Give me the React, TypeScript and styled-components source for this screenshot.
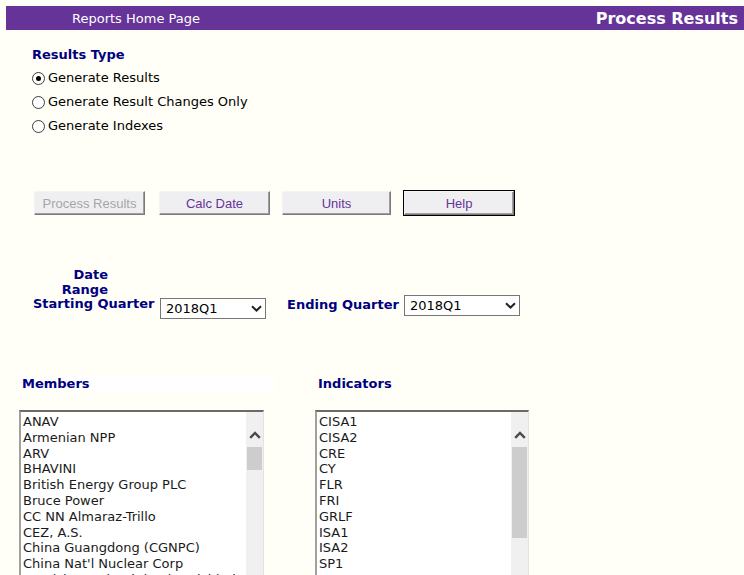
import React from "react";
import styled, { createGlobalStyle } from "styled-components";

const GlobalStyle = createGlobalStyle`
  html, body { margin: 0; padding: 0; background: #fffff7; }
  body { font-family: "DejaVu Sans", Verdana, sans-serif; font-size: 13px; color: #000; }
`;

const Page = styled.div`
  padding: 6px 0 0 6px;
`;

const HeaderBar = styled.div`
  display: flex;
  align-items: center;
  justify-content: space-between;
  height: 24px;
  background: #663399;
  color: #fff;
`;

const HomeLink = styled.span`
  padding-left: 66px;
  font-size: 13px;
`;

const Title = styled.span`
  padding-right: 6px;
  font-size: 16px;
  font-weight: bold;
`;

const Section = styled.div`
  padding-left: 26px;
`;

const Heading = styled.div`
  color: #000080;
  font-weight: bold;
  font-size: 13px;
  line-height: 16px;
`;

const TypeBlock = styled(Section)`
  margin-top: 17px;
`;

const RadioList = styled.div`
  display: flex;
  flex-direction: column;
  gap: 8px;
  margin-top: 7px;
`;

const RadioRow = styled.label`
  display: flex;
  align-items: center;
  gap: 3px;
  height: 16px;
  line-height: 16px;
`;

const RadioCircle = styled.span<{ $checked?: boolean }>`
  width: 11px;
  height: 11px;
  border: 1px solid #3c3c3c;
  border-radius: 50%;
  background: #fff;
  display: flex;
  align-items: center;
  justify-content: center;
  &::after {
    content: "";
    width: 5px;
    height: 5px;
    border-radius: 50%;
    background: ${(p) => (p.$checked ? "#000" : "transparent")};
  }
`;

const ButtonRow = styled.div`
  display: flex;
  margin-top: 57px;
  padding-left: 28px;
`;

const Button = styled.button<{ $w: number; $gap: number; $focus?: boolean }>`
  width: ${(p) => p.$w}px;
  height: 24px;
  margin-right: ${(p) => p.$gap}px;
  padding: 0;
  font-family: "Liberation Sans", Arial, sans-serif;
  font-size: 13px;
  color: #663399;
  background: #efeff1;
  border: 1px solid;
  border-color: #f4f4f4 #7a7a7a #7a7a7a #f4f4f4;
  box-shadow: ${(p) => (p.$focus ? "0 0 0 1px #000, inset -1px -1px 0 #a0a0a0" : "inset -1px -1px 0 #a0a0a0")};
  &:disabled { color: #a6a6a6; }
`;

const DateBlock = styled.div`
  margin-top: 52px;
  padding-left: 27px;
`;

const DateRangeLabel = styled.div`
  width: 75px;
  text-align: right;
  color: #000080;
  font-weight: bold;
  line-height: 15px;
`;

const QuarterRow = styled.div`
  display: flex;
  align-items: flex-start;
`;

const QuarterLabel = styled.span<{ $ml: number; $w: number; $dy: number }>`
  margin-left: ${(p) => p.$ml}px;
  width: ${(p) => p.$w}px;
  color: #000080;
  font-weight: bold;
  line-height: 13px;
  margin-top: ${(p) => p.$dy}px;
`;

const SelectBox = styled.div<{ $w: number; $dy: number }>`
  width: ${(p) => p.$w}px;
  height: 21px;
  box-sizing: border-box;
  border: 1px solid #767676;
  background: #fff;
  display: flex;
  align-items: center;
  justify-content: space-between;
  padding: 0 3px 0 5px;
  margin-top: ${(p) => p.$dy}px;
  font-size: 13px;
`;

const ListsArea = styled.div`
  display: grid;
  grid-template-columns: 256px 213px;
  column-gap: 40px;
  margin-top: 57px;
  padding-left: 13px;
`;

const ListColumn = styled.div`
  display: flex;
  flex-direction: column;
`;

const ListHeading = styled.div<{ $white?: boolean }>`
  color: #000080;
  font-weight: bold;
  height: 15px;
  line-height: 15px;
  padding-left: ${(p) => (p.$white ? 2 : 3)}px;
  margin-left: ${(p) => (p.$white ? 1 : 0)}px;
  background: ${(p) => (p.$white ? "#fff" : "transparent")};
`;

const ListBox = styled.div<{ $w: number }>`
  margin-top: 19px;
  width: ${(p) => p.$w}px;
  height: 190px;
  box-sizing: border-box;
  display: flex;
  border-style: solid;
  border-width: 2px 1px 1px 2px;
  border-color: #6a6a6a #e3e3e3 #e3e3e3 #a0a0a0;
  background: #fff;
  overflow: hidden;
`;

const Items = styled.div`
  flex: 1;
  padding: 2px 0 0 2px;
  color: #1a1a1a;
`;

const Item = styled.div`
  line-height: 15.8px;
  white-space: nowrap;
`;

const ScrollTrack = styled.div`
  width: 17px;
  background: #f0f0f0;
  display: flex;
  flex-direction: column;
  align-items: center;
`;

const ScrollArrow = styled.div`
  height: 15px;
  margin-top: 15px;
  display: flex;
  align-items: center;
`;

const Thumb = styled.div<{ $h: number }>`
  width: 15px;
  height: ${(p) => p.$h}px;
  background: #cdcdcd;
  margin-top: 5px;
`;

const SelectChevron = () => (
  <svg width="11" height="7" viewBox="0 0 11 7">
    <path d="M1 1.2 L5.5 5.5 L10 1.2" fill="none" stroke="#222" strokeWidth="2" />
  </svg>
);

const ScrollChevron = () => (
  <svg width="12" height="8" viewBox="0 0 12 8">
    <path d="M1.2 6.8 L6 2 L10.8 6.8" fill="none" stroke="#4a4a4a" strokeWidth="2.4" />
  </svg>
);

const members = [
  "ANAV",
  "Armenian NPP",
  "ARV",
  "BHAVINI",
  "British Energy Group PLC",
  "Bruce Power",
  "CC NN Almaraz-Trillo",
  "CEZ, A.S.",
  "China Guangdong (CGNPC)",
  "China Nat'l Nuclear Corp",
  "Comision Federal de Electricidad",
  "Constellation Energy",
];

const indicators = ["CISA1", "CISA2", "CRE", "CY", "FLR", "FRI", "GRLF", "ISA1", "ISA2", "SP1"];

export default function App() {
  return (
    <Page>
      <GlobalStyle />
      <HeaderBar>
        <HomeLink>Reports Home Page</HomeLink>
        <Title>Process Results</Title>
      </HeaderBar>

      <TypeBlock>
        <Heading>Results Type</Heading>
        <RadioList>
          <RadioRow>
            <RadioCircle $checked />
            Generate Results
          </RadioRow>
          <RadioRow>
            <RadioCircle />
            Generate Result Changes Only
          </RadioRow>
          <RadioRow>
            <RadioCircle />
            Generate Indexes
          </RadioRow>
        </RadioList>
      </TypeBlock>

      <ButtonRow>
        <Button $w={111} $gap={14} disabled>
          Process Results
        </Button>
        <Button $w={111} $gap={12}>
          Calc Date
        </Button>
        <Button $w={109} $gap={13}>
          Units
        </Button>
        <Button $w={110} $gap={0} $focus>
          Help
        </Button>
      </ButtonRow>

      <DateBlock>
        <DateRangeLabel>
          Date
          <br />
          Range
        </DateRangeLabel>
        <QuarterRow>
          <QuarterLabel $ml={0} $w={127} $dy={0}>Starting Quarter</QuarterLabel>
          <SelectBox $w={106} $dy={1}>
            2018Q1
            <SelectChevron />
          </SelectBox>
          <QuarterLabel $ml={21} $w={117} $dy={1}>Ending Quarter</QuarterLabel>
          <SelectBox $w={116} $dy={-2}>
            2018Q1
            <SelectChevron />
          </SelectBox>
        </QuarterRow>
      </DateBlock>

      <ListsArea>
        <ListColumn>
          <ListHeading $white>Members</ListHeading>
          <ListBox $w={245}>
            <Items>
              {members.map((m) => (
                <Item key={m}>{m}</Item>
              ))}
            </Items>
            <ScrollTrack>
              <ScrollArrow>
                <ScrollChevron />
              </ScrollArrow>
              <Thumb $h={23} />
            </ScrollTrack>
          </ListBox>
        </ListColumn>
        <ListColumn>
          <ListHeading>Indicators</ListHeading>
          <ListBox $w={214}>
            <Items>
              {indicators.map((m) => (
                <Item key={m}>{m}</Item>
              ))}
            </Items>
            <ScrollTrack>
              <ScrollArrow>
                <ScrollChevron />
              </ScrollArrow>
              <Thumb $h={91} />
            </ScrollTrack>
          </ListBox>
        </ListColumn>
      </ListsArea>
    </Page>
  );
}
